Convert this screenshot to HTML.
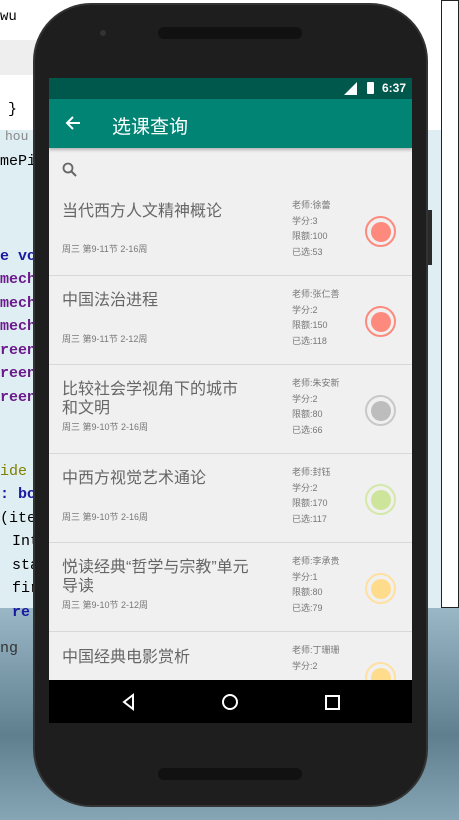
<!DOCTYPE html>
<html><head><meta charset="utf-8">
<style>
*{margin:0;padding:0;box-sizing:border-box}
body{width:459px;height:820px;overflow:hidden;position:relative;background:#dfeef3;font-family:"Liberation Sans","Noto Sans CJK SC",sans-serif}
.abs{position:absolute}
.code{position:absolute;font-family:"Liberation Mono",monospace;font-size:15px;font-weight:bold;white-space:pre;line-height:23.5px}
.phone{left:33px;top:3px;width:395px;height:804px;background:#1e1e1e;border-radius:58px;border:2px solid #333}
.screen{left:49px;top:78px;width:363px;height:645px;background:#f0f0f0;overflow:hidden}
.item{position:absolute;left:0;width:363px;height:89px;border-bottom:1px solid #d8d8d8}
.t{position:absolute;left:13px;font-size:16px;color:#666;line-height:19px}
.s{position:absolute;left:13px;font-size:9px;color:#777}
.i{position:absolute;left:243px;font-size:9px;color:#777;line-height:15.5px}
.c{position:absolute;left:316px;width:31px;height:31px;border-radius:50%;border:2px solid}
.c div{position:absolute;left:3.5px;top:3.5px;width:20px;height:20px;border-radius:50%}
</style></head><body>
<div class="abs" style="left:0;top:0;width:459px;height:130px;background:#fff"></div>
<div class="abs" style="left:0;top:40px;width:40px;height:35px;background:#eee"></div>
<div class="abs" style="left:0;top:608px;width:459px;height:212px;background:linear-gradient(#9ab7c6,#5f7f8f 60%,#86a6b6)"></div>
<div class="abs" style="left:441px;top:0;width:18px;height:608px;border:1px solid #222;background:#fff"></div>
<div class="code" style="left:0;top:6px;font-weight:normal;font-size:14px;color:#000">wu</div>
<div class="code" style="left:8px;top:98px;font-weight:normal;color:#000">}</div>
<div class="code" style="left:5px;top:125px;font-weight:normal;color:#888;font-size:13px">hou</div>
<div class="code" style="left:0;top:150px;font-weight:normal;color:#000">mePi</div>
<div class="code" style="left:0;top:245px;color:#1a1aa0">e vo</div>
<div class="code" style="left:0;top:268px;color:#6a1a8a">mech
mech
mech
reen
reen
reen</div>
<div class="code" style="left:0;top:460px;color:#808000;font-weight:normal">ide</div>
<div class="code" style="left:0;top:483px;color:#1a1aa0">: boo</div>
<div class="code" style="left:0;top:507px;color:#000;font-weight:normal">(iter</div>
<div class="code" style="left:12px;top:530px;color:#000;font-weight:normal">Int
sta
fir</div>
<div class="code" style="left:12px;top:601px;color:#1a1aa0">re</div>
<div class="code" style="left:0;top:637px;color:#333;font-weight:normal">ng</div>

<div class="abs phone"></div>
<div class="abs" style="left:100px;top:30px;width:6px;height:6px;border-radius:50%;background:#333"></div>
<div class="abs" style="left:158px;top:27px;width:144px;height:12px;border-radius:6px;background:#111"></div>
<div class="abs" style="left:158px;top:768px;width:144px;height:12px;border-radius:6px;background:#111"></div>
<div class="abs" style="left:428px;top:210px;width:4px;height:55px;background:#2a2a2a"></div>

<div class="abs screen">
  <div class="abs" style="left:0;top:0;width:363px;height:21px;background:#00574b"></div>
  <div class="abs" style="right:6px;top:3px;color:#fff;font-size:12px;font-weight:bold">6:37</div>
  <div class="abs" style="left:318px;top:4px;width:7px;height:12px;background:#fff;border-radius:1px"></div>
  <svg class="abs" style="left:294px;top:4px" width="14" height="13"><polygon points="14,0 14,13 1,13" fill="#fff"/></svg>
  <div class="abs" style="left:0;top:21px;width:363px;height:49px;background:#018474;box-shadow:0 2px 3px rgba(0,0,0,.25)"></div>
  <svg class="abs" style="left:16px;top:37px" width="16" height="16"><path d="M15 8H2M8 2L2 8l6 6" stroke="#fff" stroke-width="2" fill="none"/></svg>
  <div class="abs" style="left:63px;top:34px;color:#fff;font-size:19px">选课查询</div>
  <svg class="abs" style="left:13px;top:84px" width="16" height="16"><circle cx="6" cy="6" r="4.5" stroke="#666" stroke-width="1.8" fill="none"/><path d="M9.5 9.5L14 14" stroke="#666" stroke-width="2"/></svg>

  <div class="item" style="top:108px;height:90px">
    <div class="t" style="top:16px">当代西方人文精神概论</div>
    <div class="s" style="top:56px">周三 第9-11节 2-16周</div>
    <div class="i" style="top:12px">老师:徐蕾<br>学分:3<br>限额:100<br>已选:53</div>
    <div class="c" style="top:30px;border-color:#fd8a7c"><div style="background:#fd8a7c"></div></div>
  </div>
  <div class="item" style="top:198px">
    <div class="t" style="top:15px">中国法治进程</div>
    <div class="s" style="top:56px">周三 第9-11节 2-12周</div>
    <div class="i" style="top:11px">老师:张仁善<br>学分:2<br>限额:150<br>已选:118</div>
    <div class="c" style="top:30px;border-color:#fd8a7c"><div style="background:#fd8a7c"></div></div>
  </div>
  <div class="item" style="top:287px">
    <div class="t" style="top:15px">比较社会学视角下的城市<br>和文明</div>
    <div class="s" style="top:55px">周三 第9-10节 2-16周</div>
    <div class="i" style="top:11px">老师:朱安新<br>学分:2<br>限额:80<br>已选:66</div>
    <div class="c" style="top:30px;border-color:#c8c8c8"><div style="background:#bdbdbd"></div></div>
  </div>
  <div class="item" style="top:376px">
    <div class="t" style="top:15px">中西方视觉艺术通论</div>
    <div class="s" style="top:56px">周三 第9-10节 2-16周</div>
    <div class="i" style="top:11px">老师:封钰<br>学分:2<br>限额:170<br>已选:117</div>
    <div class="c" style="top:30px;border-color:#d4e8a8"><div style="background:#cde59a"></div></div>
  </div>
  <div class="item" style="top:465px">
    <div class="t" style="top:15px">悦读经典“哲学与宗教”单元<br>导读</div>
    <div class="s" style="top:55px">周三 第9-10节 2-12周</div>
    <div class="i" style="top:11px">老师:李承贵<br>学分:1<br>限额:80<br>已选:79</div>
    <div class="c" style="top:30px;border-color:#ffe0a0"><div style="background:#ffdb8c"></div></div>
  </div>
  <div class="item" style="top:554px;border:none">
    <div class="t" style="top:16px">中国经典电影赏析</div>
    <div class="i" style="top:11px">老师:丁珊珊<br>学分:2</div>
    <div class="c" style="top:30px;border-color:#ffe0a0"><div style="background:#ffdb8c"></div></div>
  </div>
  <div class="abs" style="left:0;top:602px;width:363px;height:43px;background:#000"></div>
  <svg class="abs" style="left:70px;top:614px" width="20" height="20"><path d="M14 3L5 10l9 7z" stroke="#fff" stroke-width="2" fill="none"/></svg>
  <svg class="abs" style="left:171px;top:614px" width="20" height="20"><circle cx="10" cy="10" r="7" stroke="#fff" stroke-width="2" fill="none"/></svg>
  <svg class="abs" style="left:273px;top:614px" width="20" height="20"><rect x="4" y="4" width="13" height="13" stroke="#fff" stroke-width="2" fill="none"/></svg>
</div>
</body></html>
